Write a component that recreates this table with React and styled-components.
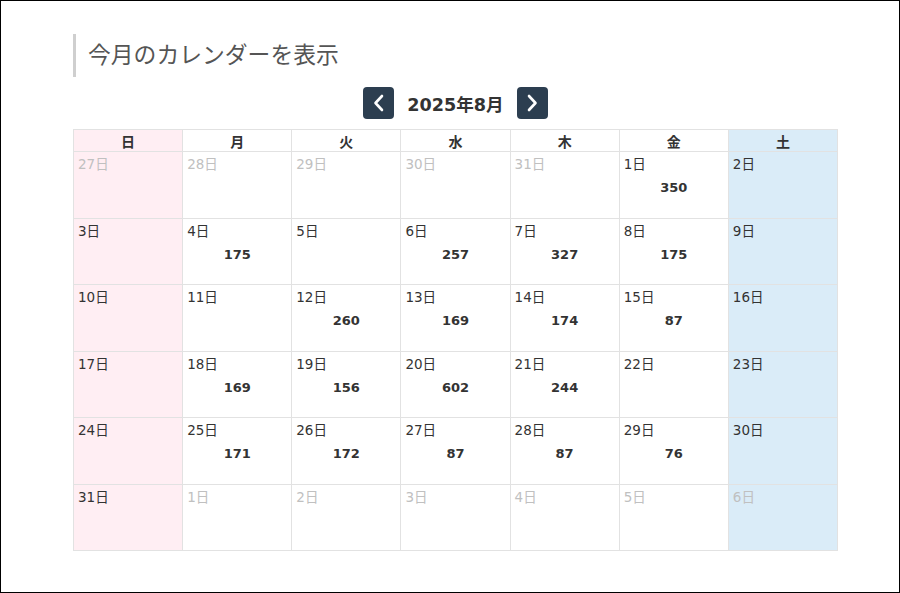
import React, { useState } from 'react';
import styled, { createGlobalStyle } from 'styled-components';

const GlobalStyle = createGlobalStyle`
  body {
    margin: 0;
    font-family: "DejaVu Sans", "Noto Sans CJK JP", sans-serif;
    color: #333;
  }
`;

const Frame = styled.div`
  width: 900px;
  height: 593px;
  box-sizing: border-box;
  border: 1px solid #000;
  padding: 33px 0 0 72px;
  background: #fff;
`;

const Heading = styled.h2`
  margin: 0;
  height: 43px;
  border-left: 3px solid #cfcfcf;
  padding-left: 12px;
  font-family: "Noto Sans CJK JP", sans-serif;
  font-size: 22.8px;
  font-weight: 400;
  color: #555;
  line-height: 40px;
`;

const Nav = styled.div`
  width: 765px;
  display: flex;
  justify-content: center;
  align-items: center;
  gap: 13px;
  margin-top: 10px;
  margin-bottom: 10px;
`;

const NavButton = styled.button`
  width: 31px;
  height: 32px;
  border: none;
  border-radius: 4px;
  background: #2c3e50;
  color: #fff;
  display: flex;
  align-items: center;
  justify-content: center;
  padding: 0;
  cursor: pointer;
`;

const Title = styled.div`
  font-size: 17.6px;
  font-weight: 700;
  color: #333;
`;

const Table = styled.table`
  width: 765px;
  table-layout: fixed;
  border-collapse: collapse;
`;

const Th = styled.th`
  height: 21px;
  padding: 0;
  border: 1px solid #e2e2e2;
  font-size: 14px;
  font-weight: 700;
  color: #333;
  background: ${(p) => (p.$wd === 0 ? '#ffeef3' : p.$wd === 6 ? '#daecf8' : '#fff')};
`;

const Td = styled.td`
  height: 60.5px;
  padding: 2px 4px 3px;
  border: 1px solid #e2e2e2;
  vertical-align: top;
  background: ${(p) => (p.$wd === 0 ? '#ffeef3' : p.$wd === 6 ? '#daecf8' : '#fff')};
`;

const DayNum = styled.div`
  font-size: 13.5px;
  line-height: 20px;
  color: ${(p) => (p.$other ? '#c0c0c0' : '#333')};
`;

const Count = styled.div`
  text-align: center;
  font-size: 13px;
  font-weight: 700;
  line-height: 28px;
  color: #333;
`;

const Chevron = ({ dir }) => (
  <svg width="14" height="18" viewBox="0 0 14 18" fill="none">
    <path
      d={dir === 'left' ? 'M10 2 L3.5 9 L10 16' : 'M4 2 L10.5 9 L4 16'}
      stroke="#fff"
      strokeWidth="2.6"
      strokeLinecap="round"
      strokeLinejoin="round"
    />
  </svg>
);

const weekdays = ['日', '月', '火', '水', '木', '金', '土'];

const counts = {
  1: 350, 4: 175, 6: 257, 7: 327, 8: 175,
  12: 260, 13: 169, 14: 174, 15: 87,
  18: 169, 19: 156, 20: 602, 21: 244,
  25: 171, 26: 172, 27: 87, 28: 87, 29: 76,
};

function buildWeeks(year, month) {
  const first = new Date(year, month - 1, 1);
  const start = new Date(year, month - 1, 1 - first.getDay());
  const weeks = [];
  for (let w = 0; w < 6; w++) {
    const row = [];
    for (let d = 0; d < 7; d++) {
      const dt = new Date(start);
      dt.setDate(start.getDate() + w * 7 + d);
      row.push({ day: dt.getDate(), other: dt.getMonth() !== month - 1 });
    }
    weeks.push(row);
  }
  return weeks;
}

export default function App() {
  const [ym] = useState({ year: 2025, month: 8 });
  const weeks = buildWeeks(ym.year, ym.month);

  return (
    <Frame>
      <GlobalStyle />
      <Heading>今月のカレンダーを表示</Heading>
      <Nav>
        <NavButton aria-label="前の月"><Chevron dir="left" /></NavButton>
        <Title>{ym.year}年{ym.month}月</Title>
        <NavButton aria-label="次の月"><Chevron dir="right" /></NavButton>
      </Nav>
      <Table>
        <thead>
          <tr>
            {weekdays.map((w, i) => (
              <Th key={w} $wd={i}>{w}</Th>
            ))}
          </tr>
        </thead>
        <tbody>
          {weeks.map((row, wi) => (
            <tr key={wi}>
              {row.map((c, di) => (
                <Td key={di} $wd={di}>
                  <DayNum $other={c.other}>{c.day}日</DayNum>
                  {!c.other && counts[c.day] && <Count>{counts[c.day]}</Count>}
                </Td>
              ))}
            </tr>
          ))}
        </tbody>
      </Table>
    </Frame>
  );
}
